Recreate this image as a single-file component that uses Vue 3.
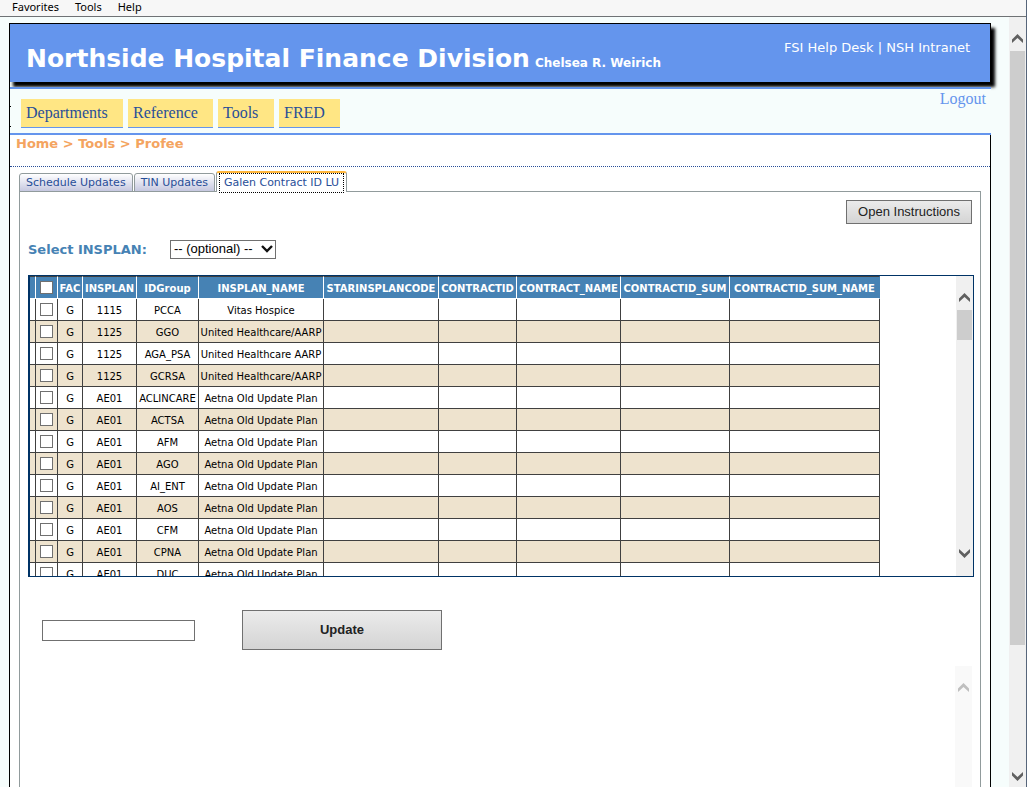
<script setup>
import { ref } from 'vue'

const browserMenu = ['Favorites', 'Tools', 'Help']
const nav = [
  { label: 'Departments', size: 'n1' },
  { label: 'Reference', size: 'n2' },
  { label: 'Tools', size: 'n3' },
  { label: 'FRED', size: 'n4' }
]
const tabs = ['Schedule Updates', 'TIN Updates', 'Galen Contract ID LU']
const active = ref(2)
const columns = ['FAC', 'INSPLAN', 'IDGroup', 'INSPLAN_NAME', 'STARINSPLANCODE', 'CONTRACTID', 'CONTRACT_NAME', 'CONTRACTID_SUM', 'CONTRACTID_SUM_NAME']
const aetna = 'Aetna Old Update Plan'
const rows = [
  ['1115', 'PCCA', 'Vitas Hospice'],
  ['1125', 'GGO', 'United Healthcare/AARP'],
  ['1125', 'AGA_PSA', 'United Healthcare AARP'],
  ['1125', 'GCRSA', 'United Healthcare/AARP'],
  ['AE01', 'ACLINCARE', aetna],
  ['AE01', 'ACTSA', aetna],
  ['AE01', 'AFM', aetna],
  ['AE01', 'AGO', aetna],
  ['AE01', 'AI_ENT', aetna],
  ['AE01', 'AOS', aetna],
  ['AE01', 'CFM', aetna],
  ['AE01', 'CPNA', aetna],
  ['AE01', 'DUC', aetna]
]
</script>

<template>
  <div class="window">
    <div class="menubar">
      <button v-for="m in browserMenu" :key="m" type="button">{{ m }}</button>
    </div>
    <div class="viewport">
      <div class="canvas">
        <div class="page">
          <header class="banner">
            <div class="brand">
              <h1>Northside Hospital Finance Division</h1>
              <span>Chelsea R. Weirich</span>
            </div>
            <div class="links"><a href="#">FSI Help Desk</a> | <a href="#">NSH Intranet</a></div>
          </header>
          <nav class="nav">
            <a v-for="n in nav" :key="n.label" href="#" class="item" :class="n.size">{{ n.label }}</a>
            <a href="#" class="logout">Logout</a>
          </nav>
          <main class="body">
            <div class="crumbs"><a href="#">Home</a> &gt; <a href="#">Tools</a> &gt; <a href="#">Profee</a></div>
            <div class="tabs" role="tablist">
              <button v-for="(t, i) in tabs" :key="t" type="button" role="tab" :aria-selected="i === active" class="tab" :class="{ on: i === active }" @click="active = i"><span>{{ t }}</span></button>
            </div>
            <section class="panel">
              <div class="instructions"><button type="button" class="btn">Open Instructions</button></div>
              <div class="filter">
                <label for="plan">Select INSPLAN:</label>
                <div class="select">
                  <select id="plan"><option>-- (optional) --</option></select>
                  <svg viewBox="0 0 12 8" aria-hidden="true"><path d="M1 1l5 5 5-5" fill="none" stroke="#111" stroke-width="2.4" /></svg>
                </div>
              </div>
              <div class="grid">
                <div class="scroll">
                  <table>
                    <thead>
                      <tr>
                        <th class="edge"></th>
                        <th class="pick"><input type="checkbox" aria-label="Select all" /></th>
                        <th v-for="(c, i) in columns" :key="c" :class="'c' + i">{{ c }}</th>
                      </tr>
                    </thead>
                    <tbody>
                      <tr v-for="r in rows" :key="r[1]">
                        <td></td>
                        <td class="pick"><input type="checkbox" :aria-label="'Select ' + r[1]" /></td>
                        <td>G</td>
                        <td v-for="v in r" :key="v">{{ v }}</td>
                        <td v-for="n in 5" :key="n"></td>
                      </tr>
                    </tbody>
                  </table>
                </div>
                <div class="bar">
                  <svg class="arrow" viewBox="0 0 11 9" aria-hidden="true"><path d="M0 5.5L5.5 0 11 5.5V9L5.5 4 0 9z" /></svg>
                  <div class="thumb"></div>
                  <svg class="arrow down" viewBox="0 0 11 9" aria-hidden="true"><path d="M0 5.5L5.5 0 11 5.5V9L5.5 4 0 9z" /></svg>
                </div>
              </div>
              <form class="update" @submit.prevent>
                <input type="text" aria-label="Contract ID" />
                <button type="submit" class="btn big">Update</button>
              </form>
              <div class="results">
                <div class="bar faint">
                  <svg class="arrow" viewBox="0 0 11 9" aria-hidden="true"><path d="M0 5.5L5.5 0 11 5.5V9L5.5 4 0 9z" /></svg>
                </div>
              </div>
            </section>
          </main>
        </div>
      </div>
      <div class="bar outer">
        <svg class="arrow" viewBox="0 0 11 9" aria-hidden="true"><path d="M0 5.5L5.5 0 11 5.5V9L5.5 4 0 9z" /></svg>
        <div class="thumb"></div>
        <svg class="arrow down" viewBox="0 0 11 9" aria-hidden="true"><path d="M0 5.5L5.5 0 11 5.5V9L5.5 4 0 9z" /></svg>
      </div>
    </div>
  </div>
</template>

<style>
body { overflow: hidden; }
</style>

<style scoped>
* { box-sizing: border-box; }
a { color: inherit; text-decoration: none; }
button { font: inherit; }
.window {
  height: 100vh;
  display: flex;
  flex-direction: column;
  overflow: hidden;
  border-right: 1px solid #56657a;
  background: #f6fdfc;
  font-family: Verdana, "DejaVu Sans", sans-serif;
}
.menubar {
  flex: none;
  height: 17px;
  padding-left: 12px;
  display: flex;
  align-items: flex-start;
  gap: 16px;
  background: #f7f7f7;
  border-bottom: 1px solid #6f7275;
}
.menubar button {
  border: 0;
  padding: 0;
  overflow: visible;
  background: none;
  color: #000;
  font: 11px/13px "Segoe UI", "Noto Sans", sans-serif;
}
.viewport { flex: 1; min-height: 0; display: flex; }
.canvas { flex: 1; min-width: 0; display: flex; padding: 6px 18px 0 9px; }
.page { flex: 1; min-width: 0; display: flex; flex-direction: column; border-left: 1px solid #000; }
.banner {
  flex: none;
  height: 59px;
  margin-left: -1px;
  margin-bottom: 5px;
  padding: 0 20px 0 16px;
  display: flex;
  justify-content: space-between;
  border: 1px solid #000;
  border-bottom: 0;
  background: #6495ed;
  color: #fff;
  box-shadow: 4px 5px 3px #000;
  position: relative;
}
.brand { display: flex; align-items: baseline; gap: 5px; padding-top: 17px; font-weight: bold; }
.brand h1 { margin: 0; font-size: 25px; line-height: 35px; }
.brand span { font-size: 12px; }
.links { padding-top: 16px; font-size: 13px; line-height: 16px; }
.nav {
  flex: none;
  position: relative;
  height: 48px;
  padding: 10px 5px 0 11px;
  display: flex;
  align-items: flex-start;
  gap: 5px;
  border-top: 2px solid #6495ed;
  border-bottom: 2px solid #6495ed;
  background: #f6fdfc;
  font: 16px/28px "Liberation Serif", serif;
}
.nav::before {
  content: "";
  position: absolute;
  left: 0;
  top: 17px;
  width: 1px;
  height: 19px;
  border: solid #000;
  border-width: 1px 0;
}
.item { height: 29px; padding-left: 5px; background: #ffe684; border-bottom: 1px solid #6495ed; color: #284e98; }
.n1 { width: 102px; }
.n2 { width: 85px; }
.n3 { width: 56px; }
.n4 { width: 61px; }
.logout { margin: -9px 0 0 auto; line-height: 18px; color: #6495ed; }
.body { flex: 1; min-height: 0; display: flex; flex-direction: column; background: #fff; border-right: 1px solid #000; }
.crumbs {
  flex: none;
  height: 32px;
  padding-left: 6px;
  border-bottom: 1px dotted #284e98;
  color: #f4a460;
  font-size: 13px;
  font-weight: bold;
  line-height: 18px;
}
.tabs { flex: none; display: flex; align-items: flex-end; height: 25px; padding-left: 9px; margin-bottom: -1px; gap: 1px; }
.tab {
  height: 19px;
  padding: 0 6px;
  border: 1px solid #919b9c;
  border-radius: 3px 3px 0 0;
  background: linear-gradient(#fff, #c6c8e0);
  color: #284e98;
  font-size: 11px;
  line-height: 17px;
}
.tab.on { position: relative; height: 21px; padding: 0 2px; border-top: 2px solid #ffb73c; border-bottom: 0; background: #fff; }
.tab.on span { display: block; height: 20px; padding: 0 5px; outline: 1px dotted #000; outline-offset: -1px; line-height: 20px; }
.panel { flex: 1; min-height: 0; display: flex; flex-direction: column; margin: 0 9px; padding: 8px 6px 0 8px; border: 1px solid #919b9c; border-bottom: 0; }
.instructions { display: flex; justify-content: flex-end; padding-right: 2px; }
.btn {
  height: 24px;
  padding: 0 11px;
  border: 1px solid #707070;
  background: linear-gradient(#ebebeb, #d4d4d4);
  color: #222;
  font: 13px/20px "Liberation Sans", Arial, sans-serif;
}
.filter { display: flex; align-items: center; gap: 23px; height: 20px; margin: 15px 0 16px; }
.filter label { color: #4682b4; font-size: 13px; font-weight: bold; }
.select { position: relative; }
select {
  display: block;
  appearance: none;
  width: 106px;
  height: 19px;
  padding: 0 3px;
  border: 1px solid #707070;
  border-radius: 0;
  background: #fff;
  color: #000;
  font: 13px/16px "Liberation Sans", Arial, sans-serif;
}
.select svg { position: absolute; right: 3px; top: 5px; width: 12px; height: 8px; pointer-events: none; }
.grid { flex: none; height: 302px; display: flex; border: 1px solid #003366; border-left-width: 2px; }
.scroll { flex: 1; min-width: 0; overflow: hidden; }
table { width: 850px; table-layout: fixed; border-collapse: separate; border-spacing: 0; font-size: 10px; text-align: center; white-space: nowrap; }
th, td { height: 22px; padding: 0; border-right: 1px solid #404040; border-bottom: 1px solid #404040; line-height: 12px; }
td { padding-top: 2px; }
th { height: 23px; border-right-color: #fff; border-bottom-color: #fff; border-top: 1px solid #404040; background: #4682b4; color: #fff; padding-top: 3px; }
th:last-child { border-right-color: #4682b4; }
.edge { width: 6px; }
th.pick { width: 22px; }
.c0 { width: 25px; }
.c1 { width: 54px; }
.c2 { width: 62px; }
.c3 { width: 125px; }
.c4 { width: 115px; }
.c5 { width: 78px; }
.c6 { width: 104px; }
.c7 { width: 109px; }
.c8 { width: 150px; }
tbody tr:nth-child(even) { background: #eee3ce; }
.pick { padding: 0; }
.pick input { display: block; appearance: none; width: 13px; height: 13px; margin: 0 auto; border: 1px solid #707070; background: #fff; }
.bar { flex: none; display: flex; flex-direction: column; align-items: center; width: 17px; padding: 17px 1px 18px; background: #f0f0f0; }
.arrow { flex: none; width: 11px; height: 9px; fill: #606060; }
.down { transform: rotate(180deg); margin-top: auto; }
.thumb { width: 15px; height: 30px; margin-top: 8px; background: #cdcdcd; }
.outer { padding-bottom: 6px; }
.outer .thumb { flex: 0 1 594px; }
.faint { background: #f9f9f9; }
.faint .arrow { fill: #bfbfbf; }
.update { flex: none; display: flex; align-items: center; gap: 47px; height: 40px; margin: 33px 0 16px 14px; }
.update input { width: 153px; height: 21px; border: 1px solid #707070; background: #fff; padding: 0 2px; }
.big { width: 200px; height: 40px; font-weight: bold; }
.results { flex: 1; min-height: 0; display: flex; justify-content: flex-end; padding-right: 2px; }
</style>
